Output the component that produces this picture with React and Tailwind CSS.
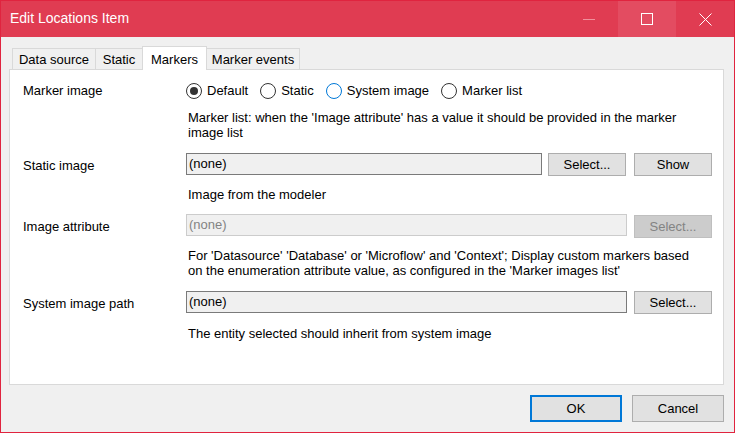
const font = { fontFamily: '"Liberation Sans", Arial, sans-serif' };

function Radio({ label, checked, hover }) {
  return (
    <label className="flex items-center gap-[5px] mr-[12px]">
      <span
        className={`flex h-[16px] w-[16px] items-center justify-center rounded-full border bg-white ${
          hover ? "border-[#0078d7]" : "border-[#333333]"
        }`}
      >
        {checked && <span className="h-[8px] w-[8px] rounded-full bg-[#333333]" />}
      </span>
      <span>{label}</span>
    </label>
  );
}

function Field({ disabled, width }) {
  return (
    <div
      className={`flex h-[22px] items-center border bg-[#f0f0f0] pl-[2px] ${width} ${
        disabled ? "border-[#cccccc] text-[#838383]" : "border-[#7a7a7a] text-black"
      }`}
    >
      (none)
    </div>
  );
}

function Btn({ children, disabled, className = "" }) {
  return (
    <div
      className={`flex h-[23px] w-[78px] items-center justify-center border ${
        disabled ? "border-[#bfbfbf] bg-[#cccccc] text-[#838383]" : "border-[#adadad] bg-[#e1e1e1] text-black"
      } ${className}`}
    >
      {children}
    </div>
  );
}

function Label({ children }) {
  return <div className="flex h-[23px] w-[163px] shrink-0 items-center pt-[2px]">{children}</div>;
}

function Tab({ children, active, width }) {
  if (active) {
    return (
      <div
        className={`relative z-10 -mb-px flex h-[24px] items-start justify-center border border-b-0 border-[#d9d9d9] bg-white pt-[3px] ${width}`}
      >
        {children}
      </div>
    );
  }
  return (
    <div
      className={`flex h-[21px] items-center justify-center border border-b-0 border-[#d9d9d9] bg-[#f0f0f0] pt-[1px] ${width}`}
    >
      {children}
    </div>
  );
}

export default function App() {
  return (
    <div
      className="flex h-[433px] w-[735px] flex-col border border-[#e0243f] bg-[#f0f0f0] text-[13px] text-black"
      style={font}
    >
      {/* title bar */}
      <div className="flex h-[36px] shrink-0 items-center bg-[#e03c52] text-white">
        <div className="flex-1 pl-[9px] pb-[1px] text-[14px]">Edit Locations Item</div>
        <div className="flex h-full w-[58px] items-center justify-center">
          <span className="mt-[1px] block h-px w-[12px] bg-[#f0909c]" />
        </div>
        <div className="flex h-full w-[58px] items-center justify-center bg-[#e34c61]">
          <span className="block h-[12px] w-[12px] border border-white" />
        </div>
        <div className="flex h-full w-[58px] items-center justify-center">
          <svg width="13" height="13" viewBox="0 0 13 13" stroke="white" strokeWidth="1">
            <path d="M0.5 0.5 L12.5 12.5 M12.5 0.5 L0.5 12.5" />
          </svg>
        </div>
      </div>

      <div className="flex flex-1 flex-col pl-[8px] pr-[10px]">
        {/* tabs */}
        <div className="mt-[9px] flex items-end pl-[3px]">
          <Tab width="w-[84px]">Data source</Tab>
          <Tab width="w-[48px] -ml-px">Static</Tab>
          <Tab active width="w-[65px] -ml-px">Markers</Tab>
          <Tab width="w-[94px] -ml-px">Marker events</Tab>
        </div>

        {/* panel */}
        <div className="h-[316px] border border-[#d9d9d9] bg-white pl-[13px] pt-[13px]">
          <div className="flex">
            <div className="flex h-[16px] w-[163px] shrink-0 items-center">Marker image</div>
            <div className="flex flex-col">
              <div className="flex h-[16px] items-center">
                <Radio label="Default" checked />
                <Radio label="Static" />
                <Radio label="System image" hover />
                <Radio label="Marker list" />
              </div>
              <div className="mt-[11px] pl-[2px] leading-[15px]">
                Marker list: when the 'Image attribute' has a value it should be provided in the marker
                <br />
                image list
              </div>
            </div>
          </div>

          <div className="mt-[13px] flex">
            <Label>Static image</Label>
            <div className="flex flex-col">
              <div className="flex items-start">
                <Field width="w-[356px]" />
                <Btn className="ml-[6px]">Select...</Btn>
                <Btn className="ml-[8px]">Show</Btn>
              </div>
              <div className="mt-[11px] pl-[2px] leading-[15px]">Image from the modeler</div>
            </div>
          </div>

          <div className="mt-[12px] flex">
            <Label>Image attribute</Label>
            <div className="flex flex-col">
              <div className="flex items-start">
                <Field disabled width="w-[441px]" />
                <Btn disabled className="ml-[7px] mt-px">Select...</Btn>
              </div>
              <div className="mt-[10px] pl-[2px] leading-[15px]">
                For 'Datasource' 'Database' or 'Microflow' and 'Context'; Display custom markers based
                <br />
                on the enumeration attribute value, as configured in the 'Marker images list'
              </div>
            </div>
          </div>

          <div className="mt-[13px] flex">
            <Label>System image path</Label>
            <div className="flex flex-col">
              <div className="flex items-start">
                <Field width="w-[441px]" />
                <Btn className="ml-[7px]">Select...</Btn>
              </div>
              <div className="mt-[12px] pl-[2px] leading-[15px]">
                The entity selected should inherit from system image
              </div>
            </div>
          </div>
        </div>

        {/* footer buttons */}
        <div className="mt-[10px] flex justify-end gap-[10px]">
          <div className="flex h-[27px] w-[92px] items-center justify-center border-2 border-[#0078d7] bg-[#e1e1e1]">
            OK
          </div>
          <div className="flex h-[27px] w-[92px] items-center justify-center border border-[#adadad] bg-[#e1e1e1]">
            Cancel
          </div>
        </div>
      </div>
    </div>
  );
}
